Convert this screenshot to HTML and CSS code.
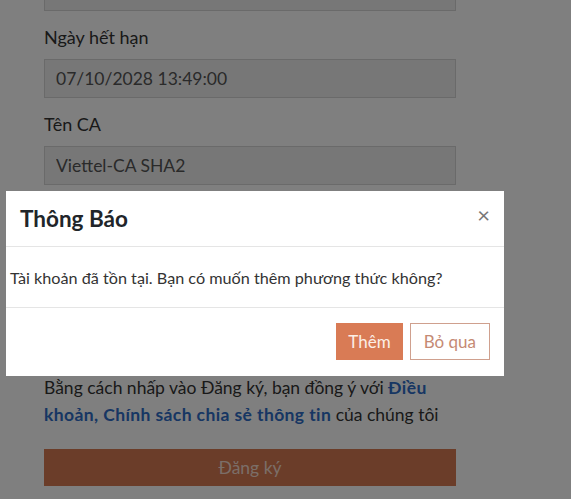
FILE: index.html
```html
<!DOCTYPE html>
<html lang="vi">
<head>
    <meta charset="UTF-8">
    <meta name="viewport" content="width=device-width, initial-scale=1.0">
    <title>Đăng ký</title>
    <link rel="stylesheet" href="styles.css">
</head>
<body>

    <div class="page">
        <!-- Registration form (scrolled) -->
        <form class="reg-form">
            <div class="field">
                <input class="input" type="text" value="" readonly>
            </div>
            <div class="field">
                <label class="label">Ngày hết hạn</label>
                <input class="input" type="text" value="07/10/2028 13:49:00" readonly>
            </div>
            <div class="field">
                <label class="label">Tên CA</label>
                <input class="input" type="text" value="Viettel-CA SHA2" readonly>
            </div>
            <div class="field">
                <label class="label">Email</label>
                <input class="input" type="text" value="" readonly>
            </div>
            <div class="field">
                <label class="label">Số điện thoại</label>
                <input class="input" type="text" value="" readonly>
            </div>

            <p class="terms">
                Bằng cách nhấp vào Đăng ký, bạn đồng ý với <a href="#" class="link">Điều khoản, Chính sách chia sẻ thông tin</a> của chúng tôi
            </p>

            <button type="button" class="btn-submit">Đăng ký</button>
        </form>
    </div>

    <!-- Modal -->
    <div class="backdrop"></div>
    <div class="modal">
        <div class="modal-header">
            <h4 class="modal-title">Thông Báo</h4>
            <button type="button" class="close">&times;</button>
        </div>
        <div class="modal-body">Tài khoản đã tồn tại. Bạn có muốn thêm phương thức không?</div>
        <div class="modal-footer">
            <button type="button" class="btn btn-primary">Thêm</button>
            <button type="button" class="btn btn-outline">Bỏ qua</button>
        </div>
    </div>

</body>
</html>
```

FILE: styles.css
```css
body {
    font-family: Lato, "Open Sans", sans-serif;
    background-color: #fff;
    color: #333;
    margin: 0;
    overflow: hidden;
}
.page {
    padding-left: 44px;
    width: 412px;
}
.reg-form {
    margin-top: -28px;
}
.field {
    display: flex;
    flex-direction: column;
}
.label {
    font-size: 18px;
    line-height: 24px;
    margin: 14px 0 10px;
    color: #333;
}
.input {
    box-sizing: border-box;
    height: 39px;
    padding: 0 11px;
    font-family: inherit;
    font-size: 17.5px;
    color: #555;
    background-color: #efefef;
    border: 1px solid #d4d4d4;
    outline: none;
}
.terms {
    font-size: 17.5px;
    line-height: 27px;
    margin: 15px 0 0;
}
.link {
    color: #2e6cc6;
    font-weight: bold;
    letter-spacing: 0.4px;
    text-decoration: none;
}
.btn-submit {
    display: block;
    width: 100%;
    height: 37px;
    margin-top: 21px;
    border: none;
    background-color: #d67a52;
    color: #f7ddd0;
    font-family: inherit;
    font-size: 17.5px;
}

.backdrop {
    position: fixed;
    top: 0;
    left: 0;
    right: 0;
    bottom: 0;
    background-color: rgba(0, 0, 0, 0.5);
}
.modal {
    position: absolute;
    top: 191px;
    left: 6px;
    width: 498px;
    background-color: #fff;
}
.modal-header {
    display: flex;
    align-items: center;
    justify-content: space-between;
    height: 55px;
    padding: 0 14px 0 14px;
    border-bottom: 1px solid #e5e5e5;
}
.modal-title {
    margin: 0;
    font-size: 22.5px;
    font-weight: bold;
    color: #212529;
}
.close {
    border: none;
    background: none;
    padding: 0;
    margin-top: -8px;
    font-family: inherit;
    font-size: 22px;
    color: #777;
    cursor: pointer;
}
.modal-body {
    display: flex;
    align-items: center;
    height: 60px;
    padding-left: 4px;
    font-size: 16.2px;
    color: #333;
}
.modal-footer {
    display: flex;
    justify-content: flex-end;
    gap: 7px;
    padding: 15px 14px 16px;
    border-top: 1px solid #e5e5e5;
}
.btn {
    height: 37px;
    padding: 0 11px;
    font-family: inherit;
    font-size: 17px;
    cursor: pointer;
}
.btn-primary {
    background-color: #d97b55;
    border: 1px solid #d97b55;
    color: #fbeee6;
}
.btn-outline {
    background-color: #fff;
    border: 1px solid #cfa08e;
    color: #c58a74;
    padding: 0 13px;
}
```
